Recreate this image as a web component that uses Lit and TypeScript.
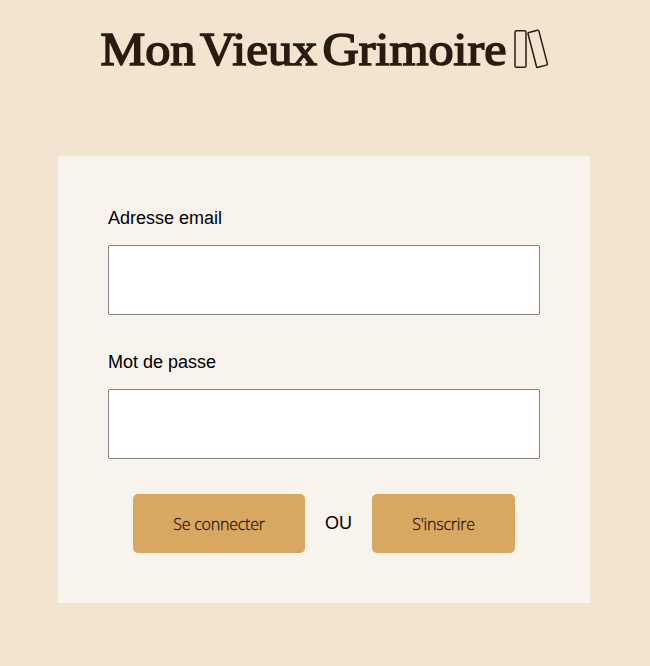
import { LitElement, html, css } from "lit";
import { customElement } from "lit/decorators.js";

@customElement("site-logo")
class SiteLogo extends LitElement {
  static styles = css`
    :host { display: block; }
    svg { display: block; }
    .word {
      font: 47px "Liberation Serif", serif;
      fill: #2b1a10;
      stroke: #2b1a10;
      stroke-width: 1.6px;
    }
    .book { fill: none; stroke: #2b1a10; stroke-width: 1.5px; }
  `;

  render() {
    return html`
      <svg width="452" height="56" viewBox="0 0 452 56" role="img" aria-label="Mon Vieux Grimoire">
        <text class="word" x="1.5" y="44.7" textLength="95" lengthAdjust="spacingAndGlyphs">Mon</text>
        <text class="word" x="101" y="44.7" textLength="117" lengthAdjust="spacingAndGlyphs">Vieux</text>
        <text class="word" x="223.5" y="44.7" textLength="184" lengthAdjust="spacingAndGlyphs">Grimoire</text>
        <rect class="book" x="416" y="10.7" width="11" height="36.6" rx="1.6" />
        <rect class="book" x="433.1" y="10.8" width="11.2" height="36" rx="1.2" transform="rotate(-14.5 438.7 28.8)" />
      </svg>
    `;
  }
}

@customElement("app-root")
class AppRoot extends LitElement {
  static styles = css`
    :host {
      display: block;
      box-sizing: border-box;
      min-height: 666px;
      padding-top: 20px;
      background: #f2e4ce;
      color: #000;
      font: 18px/21px "Liberation Sans", Arial, sans-serif;
    }
    site-logo { width: 452px; margin: 0 auto 80px; }
    .card {
      box-sizing: border-box;
      width: 532px;
      height: 447px;
      margin-left: 58px;
      padding: 52px 50px 50px;
      background: #f8f3ec;
    }
    .field { display: block; }
    .field + .field { margin-top: 37px; }
    .label { display: block; margin-bottom: 16px; }
    input {
      display: block;
      box-sizing: border-box;
      width: 432px;
      height: 70px;
      padding: 0 16px;
      border: 1px solid #858585;
      border-radius: 2px;
      background: #fff;
      font: inherit;
    }
    .actions { display: flex; justify-content: center; align-items: center; gap: 20px; margin-top: 35px; }
    button {
      box-sizing: border-box;
      width: 172px;
      height: 59px;
      padding: 0;
      border: 0;
      border-radius: 5px;
      background: #d8a761;
      color: #2b1a10;
      font: 300 16px/20px "Open Sans", "Noto Sans", sans-serif;
      letter-spacing: -0.22px;
      -webkit-text-stroke: 0.3px #2b1a10;
    }
    .signup { width: 143px; }
    .or { width: 27px; margin-bottom: 1px; }
  `;

  render() {
    return html`
      <site-logo></site-logo>
      <form class="card" @submit=${(e: Event) => e.preventDefault()}>
        <label class="field"><span class="label">Adresse email</span><input type="text" /></label>
        <label class="field"><span class="label">Mot de passe</span><input type="password" /></label>
        <div class="actions">
          <button type="submit">Se connecter</button>
          <span class="or">OU</span>
          <button class="signup" type="button">S'inscrire</button>
        </div>
      </form>
    `;
  }
}
